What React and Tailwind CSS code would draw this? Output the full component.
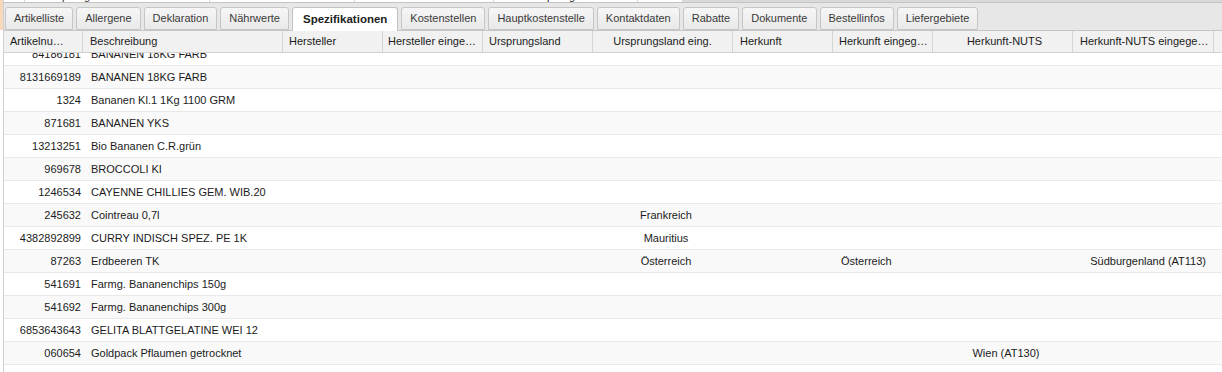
import React from 'react';

const tabs = [
  'Artikelliste',
  'Allergene',
  'Deklaration',
  'Nährwerte',
  'Spezifikationen',
  'Kostenstellen',
  'Hauptkostenstelle',
  'Kontaktdaten',
  'Rabatte',
  'Dokumente',
  'Bestellinfos',
  'Liefergebiete',
];

// column widths include the 1px divider on the right
const cols = [
  { label: 'Artikelnu…', w: 'w-[79px]', head: 'justify-start pl-[6px]', cell: 'justify-end pr-[2px]' },
  { label: 'Beschreibung', w: 'w-[200px]', head: 'justify-start pl-[7px]', cell: 'justify-start pl-[8px]' },
  { label: 'Hersteller', w: 'w-[100px]', head: 'justify-start pl-[6px]', cell: 'justify-start pl-[8px]' },
  { label: 'Hersteller einge…', w: 'w-[100px]', head: 'justify-start pl-[5px]', cell: 'justify-start pl-[8px]' },
  { label: 'Ursprungsland', w: 'w-[110px]', head: 'justify-start pl-[6px]', cell: 'justify-start pl-[8px]' },
  { label: 'Ursprungsland eing.', w: 'w-[140px]', head: 'justify-center', cell: 'justify-center pl-[6px]' },
  { label: 'Herkunft', w: 'w-[100px]', head: 'justify-start pl-[7px]', cell: 'justify-start pl-[8px]' },
  { label: 'Herkunft eingeg…', w: 'w-[100px]', head: 'justify-start pl-[6px]', cell: 'justify-start pl-[8px]' },
  { label: 'Herkunft-NUTS', w: 'w-[140px]', head: 'justify-center pl-[4px]', cell: 'justify-center pl-[6px]' },
  { label: 'Herkunft-NUTS eingege…', w: 'w-[141px]', head: 'justify-start pl-[7px]', cell: 'justify-end pr-[8px]' },
];

const rows = [
  ['84186181', 'BANANEN 18KG FARB'],
  ['8131669189', 'BANANEN 18KG FARB'],
  ['1324', 'Bananen Kl.1 1Kg 1100 GRM'],
  ['871681', 'BANANEN YKS'],
  ['13213251', 'Bio Bananen C.R.grün'],
  ['969678', 'BROCCOLI KI'],
  ['1246534', 'CAYENNE CHILLIES GEM. WIB.20'],
  ['245632', 'Cointreau 0,7l', '', '', '', 'Frankreich'],
  ['4382892899', 'CURRY INDISCH SPEZ. PE 1K', '', '', '', 'Mauritius'],
  ['87263', 'Erdbeeren TK', '', '', '', 'Österreich', '', 'Österreich', '', 'Südburgenland (AT113)'],
  ['541691', 'Farmg. Bananenchips 150g'],
  ['541692', 'Farmg. Bananenchips 300g'],
  ['6853643643', 'GELITA BLATTGELATINE WEI 12'],
  ['060654', 'Goldpack Pflaumen getrocknet', '', '', '', '', '', '', 'Wien (AT130)'],
  [],
];

export default function App() {
  return (
    <div className="w-[1222px] h-[372px] overflow-hidden bg-white flex font-['Liberation_Sans',Arial,sans-serif] text-[11px] text-[#1b1b1b]">
      {/* schmaler Rand links */}
      <div className="w-[3px] shrink-0">
        <div className="h-[30px] bg-[#f7d8bb]" />
      </div>

      <div className="flex-1 min-w-0 flex flex-col border-l border-[#cfcfcf]">
        {/* Rest der oberen Tabelle, fast ganz weggescrollt */}
        <div className="h-[3px] shrink-0 flex overflow-hidden border-b border-[#c4c4c4] bg-[#d9d9d9]">
          <div className="w-[21px] bg-white border-r border-[#d6d6d6]" />
          <div className="w-[185px] bg-white border-r border-[#d6d6d6] pl-[20px] leading-[12px] -mt-[10px] text-[#333]">Ursprungsland</div>
          <div className="w-[145px] bg-white border-r border-[#d6d6d6]" />
          <div className="w-[139px] bg-white border-r border-[#d6d6d6] pl-[4px] leading-[12px] -mt-[10px]">Herstd</div>
          <div className="w-[144px] bg-white border-r border-[#d6d6d6] pl-[36px] leading-[12px] -mt-[10px]">Ursprung</div>
          <div className="w-[45px] bg-white border-r border-[#d6d6d6]" />
        </div>

        {/* Reiter */}
        <div className="h-[28px] shrink-0 flex items-end gap-[3px] pl-[1px] bg-[#e7e7e7] border-b border-[#c6c6c6]">
          {tabs.map((t) => {
            const active = t === 'Spezifikationen';
            return (
              <div
                key={t}
                className={
                  active
                    ? 'h-[24px] -mb-[1px] px-[10px] flex items-center rounded-t-[3px] border border-b-0 border-[#c2c2c2] bg-white font-bold text-[11.5px] text-[#222]'
                    : 'h-[23px] px-[8px] flex items-center rounded-t-[3px] border border-[#c6c6c6] bg-gradient-to-b from-[#f6f6f6] to-[#e9e9e9] text-[#3a3a3a]'
                }
              >
                {t}
              </div>
            );
          })}
        </div>

        {/* Spaltenköpfe */}
        <div className="h-[22px] shrink-0 flex bg-[#f1f1f1] border-b border-[#d2d2d2]">
          {cols.map((c) => (
            <div key={c.label} className={`${c.w} shrink-0 flex items-center whitespace-nowrap overflow-hidden border-r border-[#d4d4d4] ${c.head}`}>
              {c.label}
            </div>
          ))}
          <div className="flex-1" />
        </div>

        {/* Datenzeilen */}
        <div className="flex-1 overflow-hidden">
          <div className="-mt-[10px]">
            {rows.map((r, i) => (
              <div
                key={i}
                className={`h-[23px] flex border-b border-[#e9e9e9] ${i % 2 === 1 ? 'bg-[#f9f9f9]' : 'bg-white'}`}
              >
                {cols.map((c, j) => (
                  <div key={j} className={`${c.w} shrink-0 flex items-center whitespace-nowrap overflow-hidden ${c.cell}`}>
                    {r[j] || ''}
                  </div>
                ))}
              </div>
            ))}
          </div>
        </div>
      </div>
    </div>
  );
}
